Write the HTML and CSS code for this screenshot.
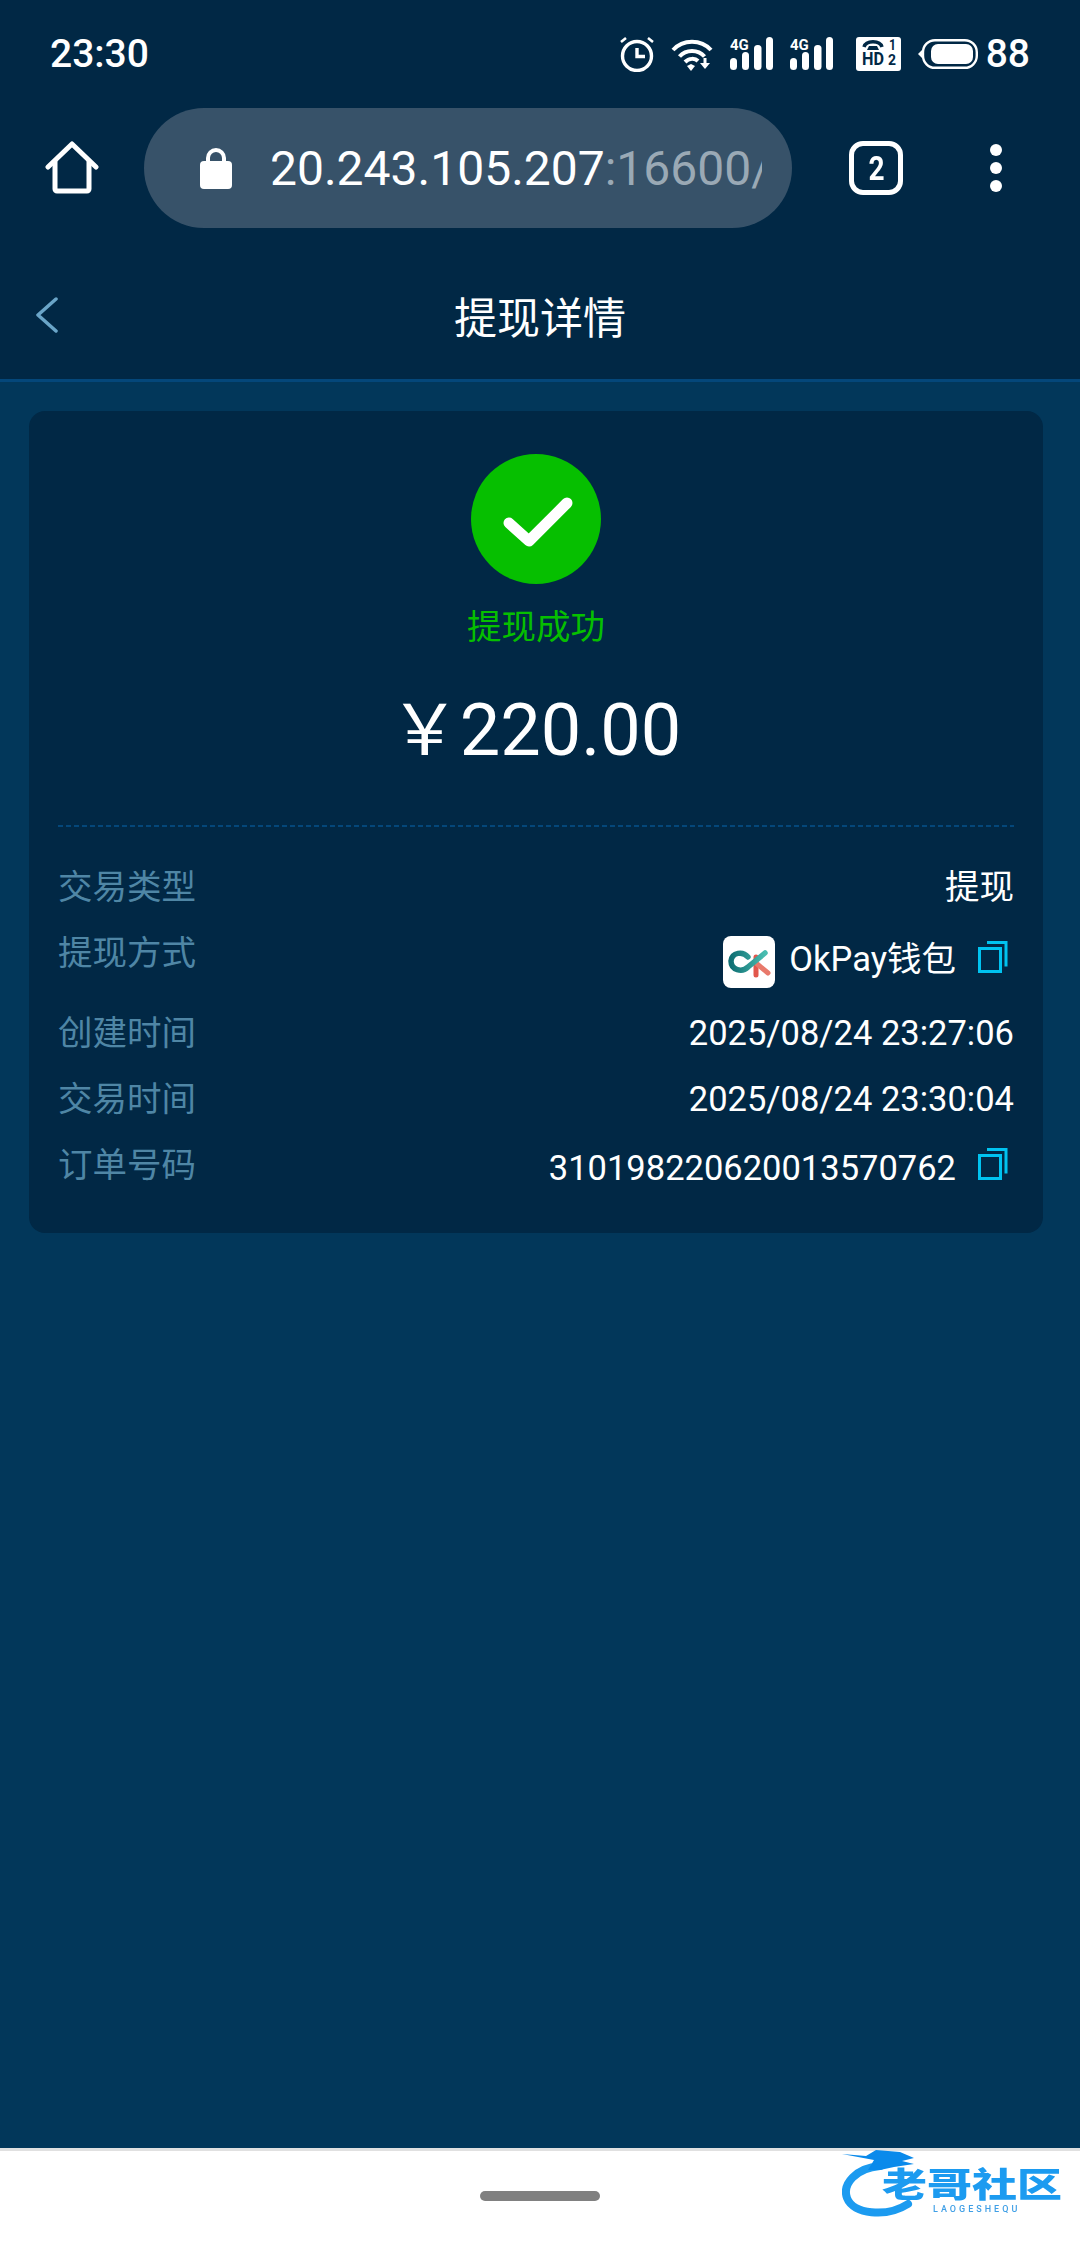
FILE: index.html
```html
<!DOCTYPE html>
<html lang="zh-CN">
<head>
    <meta charset="UTF-8">
    <meta name="viewport" content="width=device-width, initial-scale=1.0">
    <title>提现详情</title>
    <link rel="stylesheet" href="styles.css">
</head>
<body>
    <header class="browser">
        <div class="status">
            <span class="time">23:30</span>
            <div class="status-icons">
                <svg width="34" height="36" viewBox="0 0 34 36" fill="none" stroke="#fff">
                    <circle cx="17" cy="20" r="14.5" stroke-width="3.4"/>
                    <path d="M17 12v8.500h8" stroke-width="3.4"/>
                    <path d="M1 6l5-4M33 6l-5-4" stroke-width="2.600"/>
                </svg>
                <svg width="42" height="36" viewBox="0 0 42 36" fill="none" stroke="#fff" stroke-width="4">
                    <path d="M2 14C12 3 30 3 40 14"/>
                    <path d="M8.500 20.500C15 13 27 13 33.500 20.500"/>
                    <path d="M14 26C18 22 24 22 27 25"/>
                    <path d="M16 30l4-2 4 2-4 5z" fill="#fff" stroke="none"/>
                    <path d="M34 22v6" stroke-width="3"/>
                    <path d="M29 27h10l-5 6z" fill="#fff" stroke="none"/>
                </svg>
                <svg class="signal" width="43" height="34" viewBox="0 0 43 34" fill="#fff">
                    <text x="0" y="13" class="signal-text">4G</text>
                    <rect x="0" y="21" width="7" height="12" rx="3.500"/>
                    <rect x="12" y="15" width="7" height="18" rx="3.500"/>
                    <rect x="24" y="8" width="7.500" height="25" rx="3.500"/>
                    <rect x="36" y="0" width="7" height="33" rx="3.500"/>
                </svg>
                <svg class="signal" width="43" height="34" viewBox="0 0 43 34" fill="#fff">
                    <text x="0" y="13" class="signal-text">4G</text>
                    <rect x="0" y="21" width="7" height="12" rx="3.500"/>
                    <rect x="12" y="15" width="7" height="18" rx="3.500"/>
                    <rect x="24" y="8" width="7.500" height="25" rx="3.500"/>
                    <rect x="36" y="0" width="7" height="33" rx="3.500"/>
                </svg>
                <svg class="hd" width="45" height="34" viewBox="0 0 45 34">
                    <rect width="45" height="34" rx="3" fill="#fff"/>
                    <path d="M8 10C10 3 24 3 26 10" fill="none" stroke="#012845" stroke-width="3.500"/>
                    <path d="M13 9h8l2 4H11z" fill="#012845"/>
                    <text x="6" y="28" class="hd-text" textLength="22" lengthAdjust="spacingAndGlyphs">HD</text>
                    <text x="33" y="13" class="hd-small" textLength="7" lengthAdjust="spacingAndGlyphs">1</text>
                    <text x="32" y="28" class="hd-small" textLength="8" lengthAdjust="spacingAndGlyphs">2</text>
                </svg>
                <svg width="60" height="30" viewBox="0 0 60 30" fill="#fff">
                    <path d="M0 15l4-4v8z"/>
                    <rect x="5" y="1.200" width="53.800" height="27.600" rx="12" fill="none" stroke="#fff" stroke-width="2.400"/>
                    <rect x="13" y="5" width="42" height="20" rx="7"/>
                </svg>
                <span class="battery-num">88</span>
            </div>
        </div>
        <div class="toolbar">
            <svg class="home" width="54" height="54" viewBox="0 0 54 54" fill="none" stroke="#fff" stroke-width="5" stroke-linecap="round" stroke-linejoin="round">
                <path d="M3 26L27 3l24 23"/>
                <path d="M10 21v27a2 2 0 0 0 2 2h30a2 2 0 0 0 2-2V21"/>
            </svg>
            <div class="address">
                <svg width="32" height="42" viewBox="0 0 32 42" fill="#fff">
                    <path d="M8 17v-6a8 8 0 0 1 16 0v6" fill="none" stroke="#fff" stroke-width="4"/>
                    <rect y="14" width="32" height="28" rx="4"/>
                </svg>
                <span class="url">20.243.105.207<span class="url-rest">:16600/#/withdraw</span></span>
            </div>
            <div class="tabs"><span>2</span></div>
            <div class="menu"><i></i><i></i><i></i></div>
        </div>
    </header>

    <div class="title-bar">
        <svg width="22" height="36" viewBox="0 0 22 36" fill="none" stroke="#6aa5c8" stroke-width="3.500" stroke-linecap="round" stroke-linejoin="round">
            <path d="M20 2L2 18l18 16"/>
        </svg>
        <h1>提现详情</h1>
    </div>

    <main>
        <section class="card">
            <div class="result">
                <svg width="130" height="130" viewBox="0 0 130 130">
                    <circle cx="65" cy="65" r="65" fill="#06bf00"/>
                    <path d="M38 69l20 18 38-38" fill="none" stroke="#fff" stroke-width="11" stroke-linecap="round" stroke-linejoin="round"/>
                </svg>
                <p class="result-text">提现成功</p>
                <p class="amount"><span class="yen">￥</span>220.00</p>
            </div>
            <div class="divider"></div>
            <div class="row">
                <span class="label">交易类型</span>
                <span class="value">提现</span>
            </div>
            <div class="row row-method">
                <span class="label">提现方式</span>
                <span class="value">
                    <svg class="logo" width="52" height="52" viewBox="0 0 52 52">
                        <defs>
                            <linearGradient id="okTeal" x1="0" y1="0" x2="1" y2="0">
                                <stop offset="0" stop-color="#0f6f73"/>
                                <stop offset="1" stop-color="#49bdb0"/>
                            </linearGradient>
                        </defs>
                        <rect width="52" height="52" rx="8" fill="#fff"/>
                        <path d="M33 21v18" stroke="#e2574c" stroke-width="5" stroke-linecap="round"/>
                        <path d="M33 27l12 10" stroke="#e8796b" stroke-width="5" stroke-linecap="round"/>
                        <path d="M25 21C20 15 9 16 8 25C8 34 19 37 25 31L42 17" fill="none" stroke="url(#okTeal)" stroke-width="5.500" stroke-linecap="round"/>
                    </svg>
                    <span class="method-name">OkPay钱包</span>
                    <svg class="copy copy-up" width="30" height="32" viewBox="0 0 30 32" fill="none" stroke="#00c3f0" stroke-width="3">
                        <rect x="1.500" y="7.500" width="21" height="23"/>
                        <path d="M9 1.500h19v24"/>
                    </svg>
                </span>
            </div>
            <div class="row">
                <span class="label">创建时间</span>
                <span class="value">2025/08/24 23:27:06</span>
            </div>
            <div class="row">
                <span class="label">交易时间</span>
                <span class="value">2025/08/24 23:30:04</span>
            </div>
            <div class="row row-order">
                <span class="label">订单号码</span>
                <span class="value">
                    <span class="order-no">310198220620013570762</span>
                    <svg class="copy copy-up" width="30" height="32" viewBox="0 0 30 32" fill="none" stroke="#00c3f0" stroke-width="3">
                        <rect x="1.500" y="7.500" width="21" height="23"/>
                        <path d="M9 1.500h19v24"/>
                    </svg>
                </span>
            </div>
        </section>
    </main>

    <footer class="nav">
        <div class="nav-pill"></div>
        <div class="watermark">
            <svg width="100" height="70" viewBox="0 0 100 70" fill="none">
                <path d="M38 18C14 20 0 36 5 50C11 66 44 70 66 56" stroke="#1c9bf0" stroke-width="8" stroke-linecap="round"/>
                <path d="M0 6l24 2 10-6 24 2 14 6-12 3 12 3-20 3-14 3-12 0 6-10z" fill="#0a8aeb"/>
            </svg>
            <span class="wm-name">老哥社区</span>
            <span class="wm-sub">LAOGESHEQU</span>
        </div>
    </footer>
</body>
</html>
```

FILE: styles.css
```css
* {
    box-sizing: border-box;
}
html, body {
    margin: 0;
    padding: 0;
}
body {
    width: 1080px;
    height: 2244px;
    display: flex;
    flex-direction: column;
    overflow: hidden;
    background-color: #02375a;
    color: #fff;
    font-family: Roboto, "Noto Sans CJK SC", sans-serif;
}

/* browser chrome */
.browser {
    background-color: #012845;
}
.status {
    height: 108px;
    display: flex;
    align-items: center;
    justify-content: space-between;
    padding: 0 50px 0 50px;
}
.time {
    font-size: 39px;
    font-weight: 500;
}
.status-icons {
    display: flex;
    align-items: center;
    gap: 17px;
}
.status-icons svg {
    display: block;
}
.signal-text {
    font-family: Roboto, sans-serif;
    font-size: 15px;
    font-weight: 700;
}
.hd {
    margin-left: 6px;
}
.hd-text {
    font-family: Roboto, sans-serif;
    font-size: 18px;
    font-weight: 700;
    fill: #012845;
}
.hd-small {
    font-family: Roboto, sans-serif;
    font-size: 14px;
    font-weight: 700;
    fill: #012845;
}
.battery-num {
    margin-left: -9px;
    font-size: 39px;
    font-weight: 500;
}
.toolbar {
    height: 120px;
    display: flex;
    align-items: center;
    padding-left: 45px;
}
.home {
    flex: none;
}
.address {
    width: 648px;
    height: 120px;
    margin-left: 45px;
    padding: 0 30px 0 56px;
    display: flex;
    align-items: center;
    gap: 38px;
    border-radius: 60px;
    background-color: #375269;
}
.address svg {
    flex: none;
}
.url {
    overflow: hidden;
    white-space: nowrap;
    font-size: 48px;
}
.url-rest {
    color: #9aa9b5;
}
.tabs {
    width: 54px;
    height: 54px;
    margin-left: 57px;
    display: flex;
    align-items: center;
    justify-content: center;
    border: 5px solid #fff;
    border-radius: 14px;
    font-size: 33px;
    font-weight: 700;
}
.tabs span {
    display: block;
    transform: scaleX(.85);
}
.menu {
    margin-left: 87px;
    display: flex;
    flex-direction: column;
    gap: 6px;
}
.menu i {
    display: block;
    width: 12px;
    height: 12px;
    border-radius: 50%;
    background-color: #fff;
}

/* page title */
.title-bar {
    height: 154px;
    padding: 23px 36px 0;
    display: grid;
    grid-template-columns: 1fr auto 1fr;
    align-items: center;
    background-color: #012845;
    border-bottom: 3px solid #04477a;
}
.title-bar h1 {
    margin: 0;
    font-size: 43px;
    font-weight: 400;
}

/* detail card */
main {
    flex: 1;
    padding: 29px 37px 0 29px;
}
.card {
    padding: 43px 29px 37px;
    border-radius: 16px;
    background-color: #012845;
}
.result {
    display: flex;
    flex-direction: column;
    align-items: center;
    padding-bottom: 49px;
}
.result svg {
    display: block;
}
.result-text {
    margin: 20px 0 0;
    font-size: 34.5px;
    line-height: 46px;
    color: #06bf00;
}
.amount {
    margin: 30px 0 0;
    padding-right: 1px;
    font-size: 72px;
    line-height: 90px;
}
.yen {
    font-family: "Noto Sans CJK SC", sans-serif;
    font-size: 70px;
}
.divider {
    height: 2px;
    margin-bottom: 37px;
    background: repeating-linear-gradient(90deg, #04477a 0, #04477a 5px, transparent 5px, transparent 8px);
}
.row {
    display: flex;
    justify-content: space-between;
    align-items: flex-start;
    min-height: 46px;
    margin-bottom: 20px;
    font-size: 34.5px;
    line-height: 46px;
}
.row:last-child {
    margin-bottom: 0;
}
.label {
    color: #4f86a5;
}
.value {
    display: flex;
    align-items: center;
}
.row-method {
    height: 60px;
}
.row-method .value {
    padding-top: 6px;
}
.row-order .value {
    height: 54px;
}
.method-name {
    margin-bottom: 6px;
}
.order-no {
    margin-bottom: 2px;
}
.logo {
    margin-right: 14px;
}
.copy {
    margin: 0 6px 0 22px;
}
.copy-up {
    margin-top: -10px;
}

/* android nav bar */
.nav {
    position: relative;
    height: 96px;
    border-top: 3px solid #e0e0e0;
    background-color: #fff;
    display: flex;
    justify-content: center;
    padding-top: 40px;
}
.nav-pill {
    width: 120px;
    height: 10px;
    border-radius: 5px;
    background-color: #808080;
}
.watermark {
    position: absolute;
    left: 842px;
    top: -3px;
    width: 222px;
    height: 72px;
    color: #1c9bf0;
    filter: blur(.6px);
}
.wm-name {
    position: absolute;
    left: 40px;
    top: 13px;
    font-size: 45px;
    line-height: 50px;
    font-weight: 900;
    white-space: nowrap;
    transform: scaleY(.75);
}
.wm-sub {
    position: absolute;
    left: 91px;
    top: 55px;
    font-size: 9px;
    line-height: 12px;
    font-weight: 500;
    letter-spacing: 3px;
    color: #3f9fe6;
}
```
